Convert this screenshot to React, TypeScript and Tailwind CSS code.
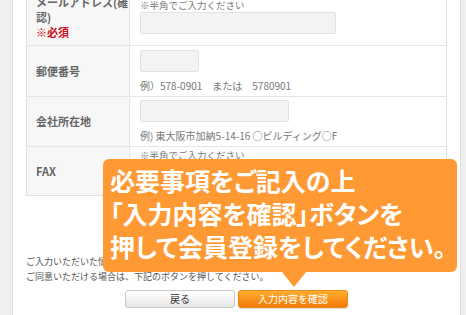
const jp = "font-['Noto_Sans_CJK_JP','Noto_Sans',sans-serif]";

const Field = ({ width }: { width: string }) => (
  <div className={`h-[22px] ${width} rounded-[2px] border border-[#e2e2e2] bg-[#f3f3f3]`} />
);

export default function App() {
  return (
    <div className={`h-[315px] w-[466px] overflow-hidden bg-[#efefef] ${jp}`}>
      <div className="relative ml-[12px] flow-root h-full w-[449px] border-x border-[#dedede] bg-white px-[13px]">
        {/* form table */}
        <div className="-mt-[11px] border border-[#e0e0e0]">
          <div className="grid grid-cols-[103px_1fr] border-b border-[#e6e6e6]">
            <div className="flex items-center border-r border-[#e6e6e6] bg-[#f7f7f7] pl-[9px] text-[11px] font-bold leading-[15px] text-[#666]">
              <div>
                メールアドレス(確
                <br />
                認)
                <br />
                <span className="text-[#d0101b]">※必須</span>
              </div>
            </div>
            <div className="pl-[10px] pt-[8px] pb-[11px]">
              <p className="text-[9.5px] leading-[14px] text-[#777]">※半角でご入力ください</p>
              <Field width="w-[196px]" />
            </div>
          </div>

          <div className="grid grid-cols-[103px_1fr] border-b border-[#e6e6e6]">
            <div className="flex items-center border-r border-[#e6e6e6] bg-[#f7f7f7] pl-[9px] text-[11px] font-bold text-[#666]">
              郵便番号
            </div>
            <div className="pl-[10px] pt-[4px] pb-[3px]">
              <Field width="w-[59px]" />
              <p className="mt-[7px] text-[10px] leading-[14px] text-[#777]">
                例）578-0901　または　5780901
              </p>
            </div>
          </div>

          <div className="grid grid-cols-[103px_1fr] border-b border-[#e6e6e6]">
            <div className="flex items-center border-r border-[#e6e6e6] bg-[#f7f7f7] pl-[9px] text-[11px] font-bold text-[#666]">
              会社所在地
            </div>
            <div className="pl-[10px] pt-[3px] pb-[3px]">
              <Field width="w-[149px]" />
              <p className="mt-[7px] text-[10px] leading-[14px] text-[#777]">
                例) 東大阪市加納5-14-16 ○ビルディング○F
              </p>
            </div>
          </div>

          <div className="grid grid-cols-[103px_1fr]">
            <div className="flex items-center border-r border-[#e6e6e6] bg-[#f7f7f7] pl-[9px] text-[11px] font-bold text-[#666]">
              FAX
            </div>
            <div className="pl-[10px] pt-[1px] pb-[11px]">
              <p className="text-[9.5px] leading-[14px] text-[#777]">※半角でご入力ください</p>
              <Field width="w-[196px]" />
            </div>
          </div>
        </div>

        <div className="mt-[58px] text-[9px] leading-[15px] text-[#555]">
          <p>ご入力いただいた情報は、弊社プライバシーポリシーに基づき管理いたします。</p>
          <p>ご同意いただける場合は、下記のボタンを押してください。</p>
        </div>

        <div className="mt-[6px] flex justify-center gap-[3px]">
          <button
            type="button"
            className="h-[18px] w-[110px] rounded-[3px] border border-[#c9c9c9] bg-gradient-to-b from-white to-[#e6e6e6] text-[10px] leading-none text-[#333]"
          >
            戻る
          </button>
          <button
            type="button"
            className="h-[18px] w-[110px] rounded-[3px] border border-[#ec8a16] bg-gradient-to-b from-[#ffad2e] to-[#f27a00] text-[10px] leading-none text-white shadow-[0_1px_1px_rgba(0,0,0,0.15)]"
          >
            入力内容を確認
          </button>
        </div>

        {/* callout */}
        <div className="absolute left-[90px] top-[159px] h-[113px] w-[354px] rounded-[6px] bg-[#ff9933] pl-[7px] pt-[5px] text-[25px] font-bold leading-[33px] text-white [font-feature-settings:'palt']">
          必要事項をご記入の上
          <br />
          「入力内容を確認」ボタンを
          <br />
          押して会員登録をしてください。
          <div className="absolute left-[179px] top-full h-0 w-0 border-x-[12px] border-t-[15px] border-x-transparent border-t-[#ff9933]" />
        </div>
      </div>
    </div>
  );
}
